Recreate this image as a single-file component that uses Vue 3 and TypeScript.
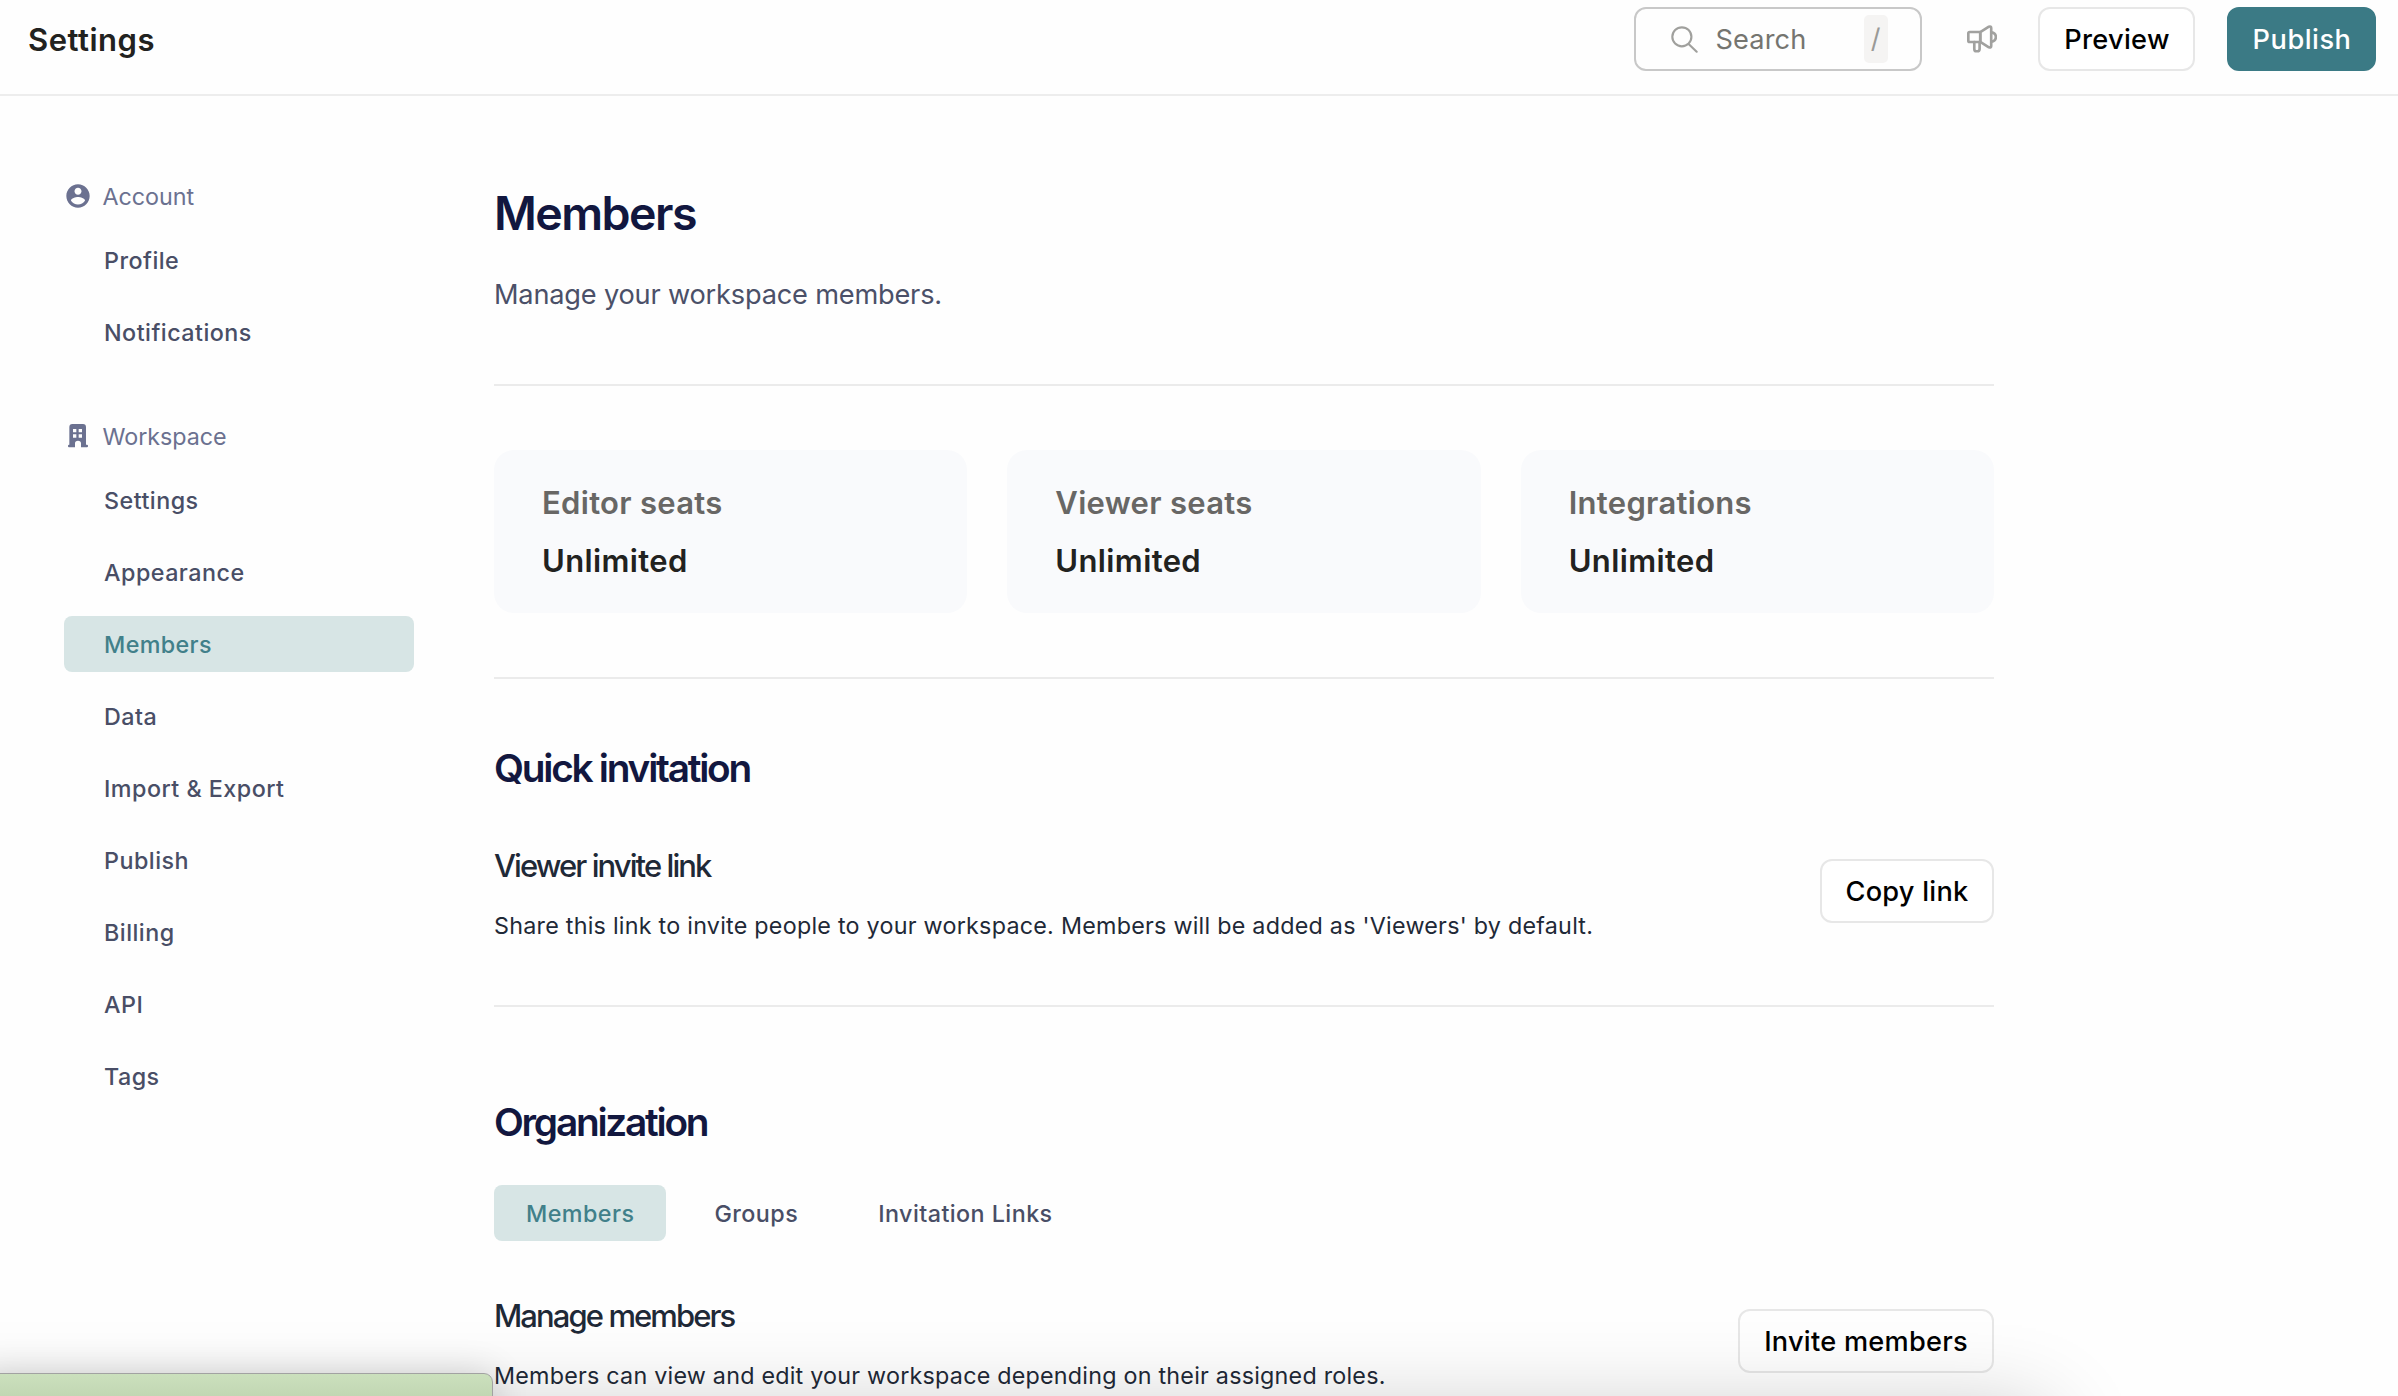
<script setup lang="ts">
import { ref } from 'vue'

interface NavSection {
  title: string
  icon: 'account' | 'building'
  items: string[]
}

const sections: NavSection[] = [
  { title: 'Account', icon: 'account', items: ['Profile', 'Notifications'] },
  {
    title: 'Workspace',
    icon: 'building',
    items: ['Settings', 'Appearance', 'Members', 'Data', 'Import & Export', 'Publish', 'Billing', 'API', 'Tags'],
  },
]

const seats = [
  { label: 'Editor seats', value: 'Unlimited' },
  { label: 'Viewer seats', value: 'Unlimited' },
  { label: 'Integrations', value: 'Unlimited' },
]

const tabs = ['Members', 'Groups', 'Invitation Links']
const activePage = ref('Members')
const activeTab = ref('Members')
</script>

<template>
  <div class="app">
    <header class="topbar">
      <div class="topbar-title">Settings</div>
      <div class="actions">
        <div class="search">
          <svg class="search-icon" viewBox="0 0 82 82" fill="none" stroke="#a0a09d" stroke-width="6.5" stroke-linecap="round">
            <circle cx="33" cy="33" r="29" />
            <path d="M55 56 78 78" />
          </svg>
          <span class="search-text">Search</span>
          <kbd class="key">/</kbd>
        </div>
        <svg class="megaphone" viewBox="0 0 92 84" fill="none" stroke="#a1a19f" stroke-width="8" stroke-linejoin="round" stroke-linecap="round">
          <path d="M40 21H8q-4 0-4 4v22q0 4 4 4h32Z" />
          <path d="M40 21 66 5q7-2 7 4v54q0 6-7 4L40 51Z" />
          <path d="M74 22q13 2 13 14T74 50" />
          <path d="M22 51v21q0 7 6 7h3q7 0 7-7V51" />
        </svg>
        <button class="btn preview">Preview</button>
        <button class="btn publish">Publish</button>
      </div>
    </header>

    <div class="body">
      <nav class="sidebar">
        <section v-for="s in sections" :key="s.title" class="group">
          <div class="group-title">
            <svg v-if="s.icon === 'account'" class="icon-account" viewBox="0 0 24 24" fill="#6b7190">
              <path d="M12 2C6.48 2 2 6.48 2 12s4.48 10 10 10 10-4.48 10-10S17.520 2 12 2zm0 3c1.660 0 3 1.340 3 3s-1.340 3-3 3-3-1.340-3-3 1.340-3 3-3zm0 14.200c-2.500 0-4.710-1.280-6-3.220.030-1.990 4-3.080 6-3.080s5.970 1.090 6 3.080c-1.290 1.940-3.500 3.220-6 3.220z" />
            </svg>
            <svg v-else class="icon-building" viewBox="0 0 60 70" fill="#6b7190" fill-rule="evenodd">
              <path d="M13 0h32q9 0 9 9v53h3q3 0 3 3v2q0 3-3 3H39V58q0-8-9-8t-9 8v12H3q-3 0-3-3v-2q0-3 3-3h1V9q0-9 9-9ZM15 15v10h10V15ZM32 15v10h10V15ZM15 31v10h10V31ZM32 31v10h10V31Z" />
            </svg>
            <span>{{ s.title }}</span>
          </div>
          <a
            v-for="item in s.items"
            :key="item"
            class="nav-item"
            :class="{ active: item === activePage }"
            @click="activePage = item"
          >{{ item }}</a>
        </section>
      </nav>

      <main class="content">
        <h1>Members</h1>
        <p class="lead">Manage your workspace members.</p>
        <hr />
        <div class="cards">
          <div v-for="seat in seats" :key="seat.label" class="card">
            <div class="card-label">{{ seat.label }}</div>
            <div class="card-value">{{ seat.value }}</div>
          </div>
        </div>
        <hr />
        <h2 class="quick">Quick invitation</h2>
        <div class="row invite">
          <div>
            <h3>Viewer invite link</h3>
            <p class="desc">Share this link to invite people to your workspace. Members will be added as 'Viewers' by default.</p>
          </div>
          <button class="btn copy">Copy link</button>
        </div>
        <hr />
        <h2 class="organization">Organization</h2>
        <div class="tabs">
          <button
            v-for="tab in tabs"
            :key="tab"
            class="tab"
            :class="{ active: tab === activeTab }"
            @click="activeTab = tab"
          >{{ tab }}</button>
        </div>
        <div class="row manage">
          <div>
            <h3>Manage members</h3>
            <p class="desc">Members can view and edit your workspace depending on their assigned roles.</p>
          </div>
          <button class="btn invite-btn">Invite members</button>
        </div>
      </main>
    </div>

    <div class="dock-shadow"></div>
    <div class="status-window"></div>
  </div>
</template>

<style>
html,
body {
  background: #fefefe;
  overflow: hidden;
}
</style>

<style scoped>
.app {
  position: relative;
  width: 2398px;
  height: 1396px;
  overflow: hidden;
  background: #fefefe;
  font-family: Inter, 'Liberation Sans', sans-serif;
}
.app * {
  box-sizing: border-box;
}
.topbar {
  display: flex;
  justify-content: space-between;
  align-items: flex-start;
  height: 96px;
  padding: 7px 22px 0 28px;
  border-bottom: 2px solid #ededed;
}
.topbar-title {
  font-size: 31px;
  font-weight: 600;
  line-height: 65px;
  letter-spacing: 0.5px;
  color: #222220;
}
.actions {
  display: flex;
  align-items: center;
}
.search {
  display: flex;
  align-items: center;
  width: 288px;
  height: 64px;
  padding: 0 32px 0 35px;
  border: 2px solid #c8c8c8;
  border-radius: 12px;
}
.search-icon {
  width: 27px;
  height: 27px;
}
.search-text {
  flex: 1;
  margin-left: 18px;
  font-size: 27.2px;
  letter-spacing: 0.1px;
  color: #757570;
}
.key {
  width: 24px;
  height: 48px;
  border-radius: 5px;
  background: #f5f4f3;
  color: #9a9a97;
  font-family: inherit;
  font-size: 27px;
  line-height: 48px;
  text-align: center;
}
.megaphone {
  width: 30.500px;
  height: 28px;
  margin: 0 41px 0 45px;
}
.btn {
  flex: none;
  height: 64px;
  padding: 0;
  border: 2px solid #e7e7e7;
  border-radius: 12px;
  background: #fff;
  color: #000;
  font-family: inherit;
  font-size: 27.2px;
  font-weight: 500;
  letter-spacing: 0.25px;
}
.preview {
  width: 157px;
  margin-right: 32px;
  padding-left: 1px;
  letter-spacing: 0.3px;
}
.publish {
  width: 149px;
  padding-left: 1px;
  border-color: #3b7a85;
  background: #3b7a85;
  color: #fff;
  letter-spacing: 0.5px;
}
.body {
  display: flex;
}
.sidebar {
  width: 414px;
  padding: 80px 0 0 64px;
}
.group + .group {
  margin-top: 56px;
}
.group-title {
  display: flex;
  align-items: center;
  height: 40px;
  margin-bottom: 16px;
  font-size: 23.3px;
  letter-spacing: -0.03px;
  color: #6b7190;
}
.icon-account {
  width: 28px;
  height: 28px;
  margin-right: 10.500px;
}
.icon-building {
  width: 20px;
  height: 23.300px;
  margin: 0 14.500px 0 4px;
}
.nav-item {
  display: block;
  height: 56px;
  padding-left: 40px;
  border-radius: 8px;
  line-height: 58px;
  font-size: 23.3px;
  font-weight: 500;
  letter-spacing: 0.48px;
  color: #494e66;
  cursor: pointer;
}
.nav-item + .nav-item {
  margin-top: 16px;
}
.nav-item.active,
.tab.active {
  background: #d7e5e5;
  color: #41808a;
}
.nav-item.active {
  letter-spacing: 0.38px;
}
.content {
  width: 1500px;
  margin-left: 80px;
  padding-top: 88px;
}
h1,
h2,
h3,
p {
  margin: 0;
}
h1 {
  font-size: 46.5px;
  font-weight: 600;
  line-height: 58px;
  letter-spacing: -1.55px;
  color: #12173f;
}
.lead {
  margin: 33px 0 69px;
  font-size: 27.2px;
  line-height: 40px;
  letter-spacing: -0.2px;
  color: #4b5068;
}
hr {
  height: 2px;
  margin: 0;
  border: 0;
  background: #ebebeb;
}
.cards {
  display: grid;
  grid-template-columns: repeat(3, 1fr);
  gap: 40px;
  margin: 64px 0;
}
.card {
  height: 163px;
  padding: 29px 48px 0;
  border-radius: 20px;
  background: #f9fafc;
  font-size: 31px;
  font-weight: 600;
  line-height: 48px;
  letter-spacing: 0.38px;
  color: #222220;
}
.card-label {
  margin-bottom: 10px;
  letter-spacing: 0.3px;
  color: #686765;
}
h2 {
  font-size: 38.8px;
  font-weight: 600;
  line-height: 48px;
  letter-spacing: -2.25px;
  color: #12173f;
}
.quick {
  margin: 65px 0 53px;
}
.row {
  display: flex;
  justify-content: space-between;
  align-items: flex-start;
}
.invite {
  margin-bottom: 61px;
}
.row .btn {
  margin-top: 14px;
}
h3 {
  margin-bottom: 22px;
  font-size: 31px;
  font-weight: 500;
  line-height: 41px;
  letter-spacing: -1.92px;
  color: #1f2937;
}
.desc {
  font-size: 23.3px;
  line-height: 36px;
  letter-spacing: 0.25px;
  color: #1f2937;
}
.manage .desc {
  letter-spacing: 0.23px;
}
.copy {
  width: 174px;
}
.invite-btn {
  width: 256px;
  background: transparent;
}
.organization {
  margin: 91px 0 39px;
}
.tabs {
  display: flex;
  gap: 16px;
  margin-bottom: 54px;
}
.tab {
  height: 56px;
  padding: 1px 32px 0;
  border: 0;
  border-radius: 8px;
  background: transparent;
  font-family: inherit;
  font-size: 23.3px;
  font-weight: 500;
  letter-spacing: 0.45px;
  color: #494e66;
}
/* Soft shadow cast by a panel sitting just below the visible area */
.dock-shadow {
  position: absolute;
  top: 1415px;
  left: -200px;
  width: 2245px;
  height: 600px;
  box-shadow: 0 0 86px rgba(0, 0, 0, 0.24);
  pointer-events: none;
}
.status-window {
  position: absolute;
  top: 1373px;
  left: -20px;
  width: 513px;
  height: 100px;
  border: 1px solid #a2a2a2;
  border-radius: 9px;
  background: linear-gradient(#cbe0bd, #c1d6b2 24px);
  box-shadow: 0 0 36px rgba(0, 0, 0, 0.16);
  pointer-events: none;
}
</style>
